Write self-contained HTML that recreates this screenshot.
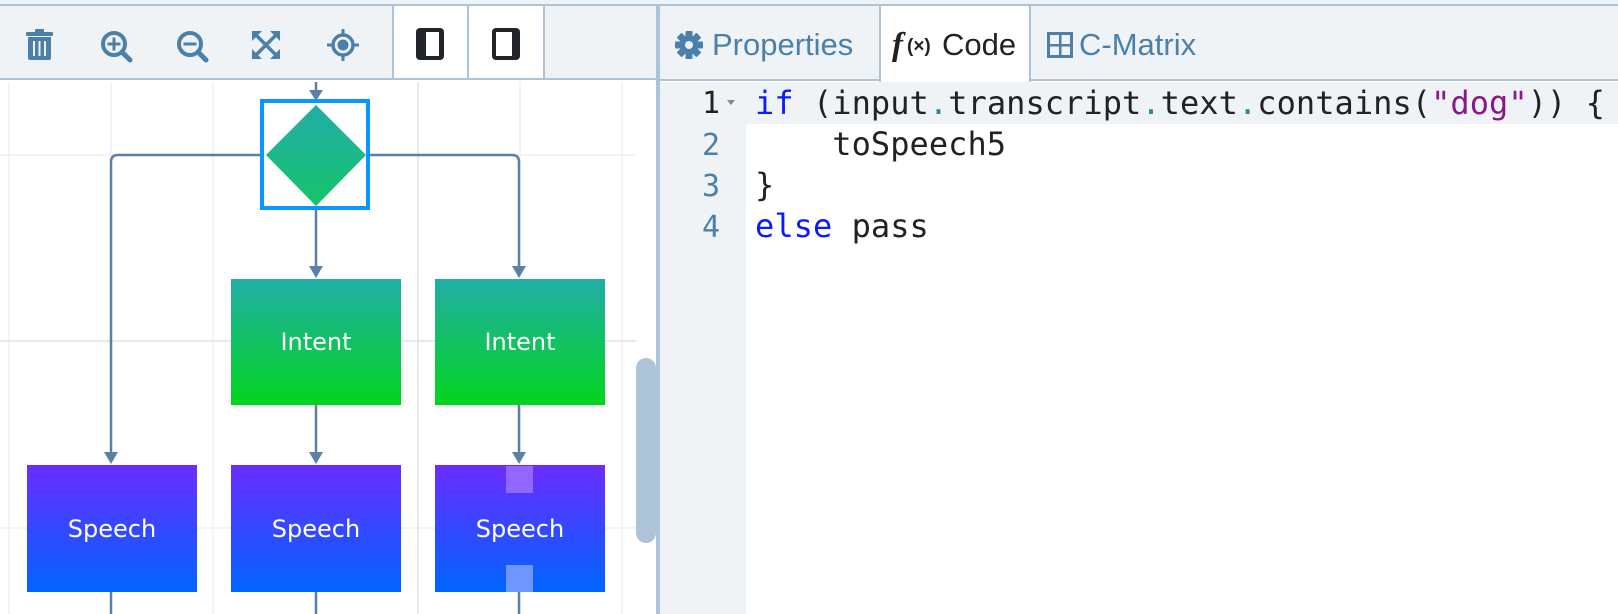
<!DOCTYPE html>
<html><head><meta charset="utf-8"><style>
*{margin:0;padding:0;box-sizing:border-box}
body{width:1618px;height:614px;overflow:hidden;background:#fff;position:relative;font-family:"Liberation Sans",sans-serif}
.abs{position:absolute}
#topline{left:0;top:4px;width:1618px;height:2px;background:#adc3d8}
#toolbar{left:0;top:6px;width:656px;height:74px;background:#eff3f6;border-bottom:2px solid #adc3d8}
#divider{left:656px;top:4px;width:4px;height:610px;background:#adc3d8}
#right{left:660px;top:6px;width:958px;height:608px;background:#fff}
#tabs{left:660px;top:6px;width:958px;height:75px;background:#eff3f6;border-bottom:2px solid #adc3d8}
.tab{position:absolute;top:0;height:75px;font-size:30px;color:#4b80aa;line-height:78px;white-space:nowrap}
#gutter{left:660px;top:82px;width:86px;height:532px;background:#eff3f6}
#hl{left:746px;top:82px;width:872px;height:42px;background:#eff3f6}
.ln{position:absolute;left:660px;width:60px;text-align:right;font-family:"DejaVu Sans Mono","Liberation Mono",monospace;font-size:30px;color:#4b80aa}
.code{position:absolute;left:755px;font-family:"DejaVu Sans Mono","Liberation Mono",monospace;font-size:32px;color:#222;white-space:pre;letter-spacing:0.05px}
.kw{color:#0b1bff}.st{color:#8a1889}.dot{color:#2a8a99}
</style></head><body>
<div class="abs" id="topline"></div>
<div class="abs" style="left:0;top:0;width:1618px;height:4px;background:#eff3f6"></div>
<svg class="abs" style="left:0;top:82px" width="656" height="532" viewBox="0 82 656 532">
<defs>
<linearGradient id="gi" x1="0" y1="0" x2="0" y2="1"><stop offset="0" stop-color="#22aea8"/><stop offset="1" stop-color="#02d41d"/></linearGradient>
<linearGradient id="gd" x1="0" y1="0" x2="0" y2="1"><stop offset="0" stop-color="#22aca9"/><stop offset="1" stop-color="#14c566"/></linearGradient>
<linearGradient id="gs" x1="0" y1="0" x2="0" y2="1"><stop offset="0" stop-color="#6a2cff"/><stop offset="1" stop-color="#0064ff"/></linearGradient>
</defs>
<g stroke="#edf1f5" stroke-width="1.5">
<line x1="9" y1="82" x2="9" y2="614"/><line x1="111" y1="82" x2="111" y2="614"/><line x1="213" y1="82" x2="213" y2="614"/><line x1="316" y1="82" x2="316" y2="614"/><line x1="520" y1="82" x2="520" y2="614"/><line x1="622" y1="82" x2="622" y2="614"/>
<line x1="0" y1="155" x2="636" y2="155"/><line x1="0" y1="528" x2="636" y2="528"/>
</g>
<g stroke="#dde3e9" stroke-width="1.5"><line x1="418" y1="82" x2="418" y2="614"/><line x1="0" y1="341" x2="636" y2="341"/></g>
<g stroke="#5a80a7" stroke-width="2.5" fill="none">
<line x1="316" y1="82" x2="316" y2="94"/>
<path d="M261 155 H118 Q111 155 111 162 V454"/>
<path d="M369 155 H512 Q519 155 519 162 V268"/>
<line x1="316" y1="209" x2="316" y2="268"/>
<line x1="316" y1="405" x2="316" y2="454"/>
<line x1="519" y1="405" x2="519" y2="454"/>
<line x1="111" y1="592" x2="111" y2="614"/><line x1="316" y1="592" x2="316" y2="614"/><line x1="519" y1="592" x2="519" y2="614"/>
</g>
<g fill="#5a80a7">
<path d="M309 90h14l-7 11z"/><path d="M309 266h14l-7 12z"/><path d="M512 266h14l-7 12z"/>
<path d="M104 452h14l-7 12z"/><path d="M309 452h14l-7 12z"/><path d="M512 452h14l-7 12z"/>
</g>
<rect x="262" y="101" width="106" height="107" fill="none" stroke="#0a96ff" stroke-width="4"/>
<path d="M316 105 L366 155 L316 206 L266 155Z" fill="url(#gd)"/>
<rect x="231" y="279" width="170" height="126" fill="url(#gi)"/>
<rect x="435" y="279" width="170" height="126" fill="url(#gi)"/>
<rect x="27" y="465" width="170" height="127" fill="url(#gs)"/>
<rect x="231" y="465" width="170" height="127" fill="url(#gs)"/>
<rect x="435" y="465" width="170" height="127" fill="url(#gs)"/>
<rect x="506" y="466" width="27" height="27" fill="#9b70ff" opacity="0.85"/>
<rect x="506" y="565" width="27" height="27" fill="#7a9cff" opacity="0.9"/>
<g fill="#fff" font-family="'DejaVu Sans','Liberation Sans',sans-serif" font-size="24" text-anchor="middle">
<text x="316" y="350">Intent</text><text x="520" y="350">Intent</text>
<text x="112" y="537">Speech</text><text x="316" y="537">Speech</text><text x="520" y="537">Speech</text>
</g>
<rect x="636" y="358" width="20" height="185" rx="10" fill="#adc3d8"/>
</svg>
<div class="abs" id="toolbar">
<svg class="abs" style="left:0;top:0" width="656" height="74">
<g fill="#4b80aa">
<rect x="26" y="26" width="27" height="4" rx="1"/><rect x="35" y="23" width="9" height="4" rx="1"/>
<path d="M28 31h23v21a2 2 0 0 1-2 2h-19a2 2 0 0 1-2-2z"/>
<g fill="#eff3f6"><rect x="33" y="35" width="2" height="15"/><rect x="38.5" y="35" width="2" height="15"/><rect x="44" y="35" width="2" height="15"/></g>
<g transform="translate(117,41)"><circle cx="-3" cy="-3" r="11" fill="none" stroke="#4b80aa" stroke-width="4"/><path d="M5 5l8 8" stroke="#4b80aa" stroke-width="5" stroke-linecap="round"/><rect x="-9.5" y="-4.5" width="13" height="3"/><rect x="-4.5" y="-9.5" width="3" height="13"/></g>
<g transform="translate(193,41)"><circle cx="-3" cy="-3" r="11" fill="none" stroke="#4b80aa" stroke-width="4"/><path d="M5 5l8 8" stroke="#4b80aa" stroke-width="5" stroke-linecap="round"/><rect x="-9.5" y="-4.5" width="13" height="3"/></g>
<g transform="translate(266,39)" stroke="#4b80aa" stroke-width="3.5"><path d="M-10 -10L10 10M10 -10L-10 10"/></g>
<g transform="translate(266,39)"><path d="M-14 -14h10l-10 10z"/><path d="M14 -14h-10l10 10z"/><path d="M-14 14h10l-10 -10z"/><path d="M14 14h-10l10 -10z"/></g>
<g transform="translate(343,39)"><circle r="10" fill="none" stroke="#4b80aa" stroke-width="3.5"/><circle r="5.5"/><rect x="-1.5" y="-16" width="3" height="6"/><rect x="-1.5" y="10" width="3" height="6"/><rect x="-16" y="-1.5" width="6" height="3"/><rect x="10" y="-1.5" width="6" height="3"/></g>
</g>
<rect x="392" y="0" width="2" height="74" fill="#adc3d8"/>
<rect x="394" y="0" width="73" height="72" fill="#fff"/>
<rect x="467" y="0" width="2" height="74" fill="#adc3d8"/>
<rect x="469" y="0" width="74" height="72" fill="#fff"/>
<rect x="543" y="0" width="2" height="74" fill="#adc3d8"/>
<rect x="416" y="22" width="28" height="32" rx="4" fill="#212529"/><rect x="426" y="26" width="13" height="24" fill="#fff"/>
<rect x="492" y="22" width="28" height="32" rx="4" fill="#212529"/><rect x="496" y="26" width="16" height="24" fill="#fff"/>
</svg>
</div>
<div class="abs" id="divider"></div>
<div class="abs" id="right"></div>
<div class="abs" id="tabs">
<div class="tab" style="left:0;width:219px">
<svg class="abs" style="left:15px;top:25px" width="28" height="28" viewBox="-14 -14 28 28"><g fill="#4b80aa"><circle r="9.5"/><g id="t"><rect x="-3.5" y="-14" width="7" height="7" rx="1"/></g><use href="#t" transform="rotate(45)"/><use href="#t" transform="rotate(90)"/><use href="#t" transform="rotate(135)"/><use href="#t" transform="rotate(180)"/><use href="#t" transform="rotate(225)"/><use href="#t" transform="rotate(270)"/><use href="#t" transform="rotate(315)"/></g><circle r="4" fill="#eff3f6"/></svg>
<span style="position:absolute;left:52px;font-size:31px">Properties</span></div>
<div class="tab" style="left:219px;width:152px;background:#fff;height:77px;border-left:2px solid #adc3d8;border-right:2px solid #adc3d8;color:#222">
<span style="position:absolute;left:11px;font-family:'Liberation Serif',serif;font-weight:bold;font-style:italic;font-size:33px">f</span><span style="position:absolute;left:26px;top:2px;font-size:19px;font-weight:bold">(×)</span>
<span style="position:absolute;left:61px;font-size:31px">Code</span></div>
<div class="tab" style="left:371px">
<svg class="abs" style="left:16px;top:26px" width="26" height="26"><rect x="1.5" y="1.5" width="23" height="23" fill="none" stroke="#4b80aa" stroke-width="3"/><rect x="12" y="1" width="2.5" height="24" fill="#4b80aa"/><rect x="1" y="12" width="24" height="2.5" fill="#4b80aa"/></svg>
<span style="position:absolute;left:48px;font-size:31px">C-Matrix</span></div>
</div>
<div class="abs" id="gutter"></div>
<div class="abs" id="hl"></div>
<div class="ln" style="top:86px;color:#222">1</div>
<svg class="abs" style="left:726px;top:99px" width="10" height="8"><path d="M1 1h8l-4 5z" fill="#888"/></svg>
<div class="ln" style="top:128px">2</div>
<div class="ln" style="top:169px">3</div>
<div class="ln" style="top:210px">4</div>
<div class="code" style="top:84px"><span class="kw">if</span> (input<span class="dot">.</span>transcript<span class="dot">.</span>text<span class="dot">.</span>contains(<span class="st">"dog"</span>)) {</div>
<div class="code" style="top:125px">    toSpeech5</div>
<div class="code" style="top:166px">}</div>
<div class="code" style="top:207px"><span class="kw">else</span> pass</div>
</body></html>
